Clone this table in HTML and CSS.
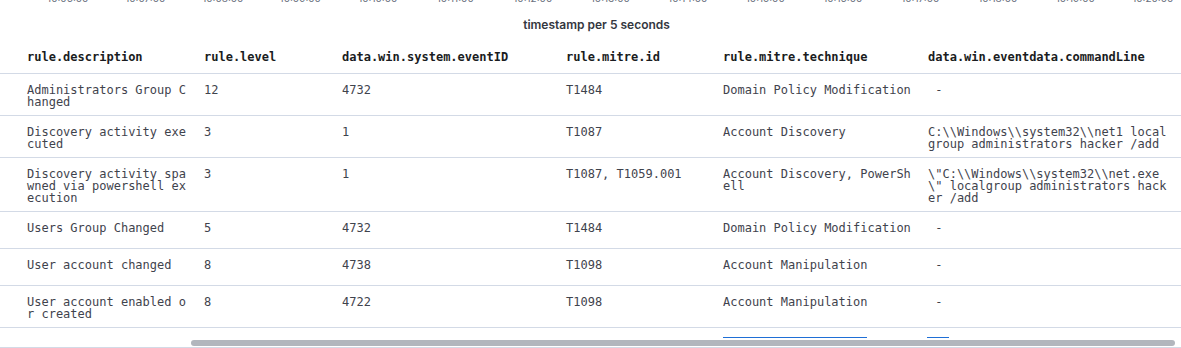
FILE: index.html
```html
<!DOCTYPE html>
<html>
<head>
<meta charset="utf-8">
<link rel="stylesheet" href="styles.css">
</head>
<body>
<div class="axis">
  <div class="axis-labels">
    <span>10:06:00</span><span>10:07:00</span><span>10:08:00</span><span>10:09:00</span><span>10:10:00</span><span>10:11:00</span><span>10:12:00</span><span>10:13:00</span><span>10:14:00</span><span>10:15:00</span><span>10:16:00</span><span>10:17:00</span><span>10:18:00</span><span>10:19:00</span><span>10:20:00</span>
  </div>
</div>
<div class="title">timestamp per 5 seconds</div>
<table class="grid">
  <colgroup>
    <col class="c1"><col class="c2"><col class="c3"><col class="c4"><col class="c5"><col class="c6">
  </colgroup>
  <thead>
    <tr>
      <th class="first">rule.description</th>
      <th>rule.level</th>
      <th>data.win.system.eventID</th>
      <th>rule.mitre.id</th>
      <th>rule.mitre.technique</th>
      <th class="last">data.win.eventdata.commandLine</th>
    </tr>
  </thead>
  <tbody>
    <tr>
      <td class="first">Administrators Group Changed</td>
      <td>12</td>
      <td>4732</td>
      <td>T1484</td>
      <td>Domain Policy Modification</td>
      <td class="last">&nbsp;-</td>
    </tr>
    <tr>
      <td class="first">Discovery activity executed</td>
      <td>3</td>
      <td>1</td>
      <td>T1087</td>
      <td>Account Discovery</td>
      <td class="last">C:\\Windows\\system32\\net1 localgroup administrators hacker /add</td>
    </tr>
    <tr>
      <td class="first">Discovery activity spawned via powershell execution</td>
      <td>3</td>
      <td>1</td>
      <td>T1087, T1059.001</td>
      <td>Account Discovery, PowerShell</td>
      <td class="last">\"C:\\Windows\\system32\\net.exe\" localgroup administrators hacker /add</td>
    </tr>
    <tr>
      <td class="first">Users Group Changed</td>
      <td>5</td>
      <td>4732</td>
      <td>T1484</td>
      <td>Domain Policy Modification</td>
      <td class="last">&nbsp;-</td>
    </tr>
    <tr>
      <td class="first">User account changed</td>
      <td>8</td>
      <td>4738</td>
      <td>T1098</td>
      <td>Account Manipulation</td>
      <td class="last">&nbsp;-</td>
    </tr>
    <tr>
      <td class="first">User account enabled or created</td>
      <td>8</td>
      <td>4722</td>
      <td>T1098</td>
      <td>Account Manipulation</td>
      <td class="last">&nbsp;-</td>
    </tr>
  </tbody>
</table>
<div class="footer">
  <span class="link-mark mark-a"></span>
  <span class="link-mark mark-b"></span>
  <div class="scroll-thumb"></div>
</div>
</body>
</html>
```

FILE: styles.css
```css
html, body {
  margin: 0;
  padding: 0;
  background: #ffffff;
}

body {
  width: 1181px;
  height: 348px;
  overflow: hidden;
  font-family: "DejaVu Sans Mono", "Liberation Mono", monospace;
  color: #343741;
}

.axis {
  height: 4px;
  overflow: hidden;
}

.axis-labels {
  display: flex;
  margin-top: -8px;
  padding-left: 29px;
  font-family: Inter, Roboto, "Liberation Sans", sans-serif;
  font-size: 10px;
  line-height: 12px;
  color: #69707d;
}

.axis-labels span {
  width: 77.5px;
  flex: none;
  text-align: center;
}

.title {
  margin-top: 13px;
  height: 16px;
  line-height: 16px;
  text-align: center;
  font-family: Inter, Roboto, "Liberation Sans", sans-serif;
  font-size: 12px;
  font-weight: 600;
  color: #343741;
  padding-left: 12px;
}

.grid {
  border-collapse: collapse;
  table-layout: fixed;
  width: 1181px;
  font-size: 12px;
  line-height: 12px;
}

.c1 { width: 196px; }
.c2 { width: 138px; }
.c3 { width: 224px; }
.c4 { width: 157px; }
.c5 { width: 205px; }
.c6 { width: 261px; }

.grid th {
  text-align: left;
  font-weight: bold;
  color: #1a1c21;
  padding: 18px 8px 10px 8px;
  border-bottom: 1px solid #d3dae6;
  white-space: nowrap;
  overflow: hidden;
}

.grid td {
  height: 37px;
  box-sizing: border-box;
  vertical-align: top;
  padding: 10px 8px 7px 8px;
  border-bottom: 1px solid #d3dae6;
  word-break: break-all;
  color: #3f434d;
}

.grid .first {
  padding-left: 27px;
}

.grid .last {
  padding-right: 10px;
}

.footer {
  position: relative;
  height: 19px;
  border-bottom: 1px solid #d3dae6;
}

.link-mark {
  position: absolute;
  top: 9px;
  height: 1px;
  background: #1f6fd6;
}

.mark-a {
  left: 723px;
  width: 144px;
}

.mark-b {
  left: 927px;
  width: 22px;
}

.scroll-thumb {
  position: absolute;
  top: 12px;
  left: 191px;
  right: 6px;
  height: 6px;
  border-radius: 3px;
  background: #b2b6bd;
}
```
